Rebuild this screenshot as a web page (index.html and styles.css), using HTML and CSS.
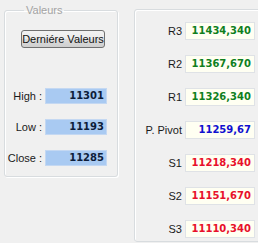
FILE: index.html
```html
<!DOCTYPE html>
<html>
<head>
<meta charset="utf-8">
<link rel="stylesheet" href="styles.css">
</head>
<body>
<div class="root">
  <fieldset class="valeurs">
    <legend>Valeurs</legend>
    <button class="btn">Derniére Valeurs</button>
    <div class="hlc">
      <div class="row"><span class="lbl">High :</span><span class="val">11301</span></div>
      <div class="row"><span class="lbl">Low :</span><span class="val">11193</span></div>
      <div class="row"><span class="lbl">Close :</span><span class="val">11285</span></div>
    </div>
  </fieldset>
  <div class="pivots">
    <div class="prow"><span class="plbl">R3</span><span class="pval green">11434,340</span></div>
    <div class="prow"><span class="plbl">R2</span><span class="pval green">11367,670</span></div>
    <div class="prow"><span class="plbl">R1</span><span class="pval green">11326,340</span></div>
    <div class="prow"><span class="plbl">P. Pivot</span><span class="pval blue">11259,67</span></div>
    <div class="prow"><span class="plbl">S1</span><span class="pval red">11218,340</span></div>
    <div class="prow"><span class="plbl">S2</span><span class="pval red">11151,670</span></div>
    <div class="prow"><span class="plbl">S3</span><span class="pval red">11110,340</span></div>
  </div>
</div>
</body>
</html>
```
FILE: styles.css
```css
html, body {
  margin: 0;
  padding: 0;
  background: #f0f0f0;
  overflow: hidden;
}
body {
  font-family: "Liberation Sans", Arial, sans-serif;
  font-size: 11px;
  color: #1a1a1a;
}
.root {
  display: flex;
  align-items: flex-start;
  padding: 4px 0 0 4px;
  width: 258px;
  box-sizing: border-box;
  overflow: hidden;
}
.valeurs {
  margin: 0;
  width: 114px;
  flex: none;
  box-sizing: border-box;
  height: 173px;
  border: 1px solid #d8dcdf;
  border-radius: 3px;
  box-shadow: 1px 1px 0 #ffffff, inset 1px 1px 0 #ffffff;
  padding: 0 0 0 16px;
}
.valeurs legend {
  color: #a3a3a3;
  padding: 0 2px;
  margin-left: 3px;
  line-height: 12px;
  font-size: 11px;
}
.btn {
  display: block;
  margin-top: 14px;
  width: 84px;
  height: 18px;
  padding: 0;
  white-space: nowrap;
  font-family: "Liberation Sans", Arial, sans-serif;
  font-size: 11px;
  color: #111;
  border: 1px solid #707070;
  border-radius: 3px;
  background: linear-gradient(#f2f2f2 0%, #ebebeb 50%, #dddddd 51%, #cfcfcf 100%);
}
.hlc {
  margin-top: 40px;
  margin-left: -16px;
  display: flex;
  flex-direction: column;
  gap: 15px;
}
.row {
  display: flex;
  align-items: center;
  height: 16px;
}
.lbl {
  width: 37px;
  text-align: right;
  padding-right: 3px;
}
.val {
  width: 62px;
  height: 16px;
  box-sizing: border-box;
  background: #a9caf2;
  border: 1px solid #c4d8f2;
  text-align: right;
  padding-right: 2px;
  font-family: "DejaVu Sans", sans-serif;
  font-size: 10px;
  font-weight: bold;
  color: #0d1d3a;
  line-height: 14px;
}
.pivots {
  flex: none;
  margin-left: 16px;
  margin-top: 5px;
  width: 140px;
  height: 233px;
  box-sizing: border-box;
  border: 1px solid #d8dcdf;
  box-shadow: inset 1px 1px 0 #ffffff, 1px 1px 0 #ffffff;
  border-radius: 3px;
  padding-top: 12px;
  display: flex;
  flex-direction: column;
  gap: 15px;
}
.prow {
  display: flex;
  align-items: center;
  height: 18px;
}
.plbl {
  width: 47px;
  text-align: right;
  padding-right: 3px;
}
.pval {
  width: 70px;
  height: 18px;
  box-sizing: border-box;
  background: #fffff2;
  border: 1px solid #dfe2e6;
  text-align: right;
  padding-right: 3px;
  font-family: "DejaVu Sans", sans-serif;
  font-size: 10px;
  font-weight: bold;
  line-height: 16px;
}
.green { color: #0f7f1e; }
.blue { color: #1010d0; }
.red { color: #e8102a; }
```
